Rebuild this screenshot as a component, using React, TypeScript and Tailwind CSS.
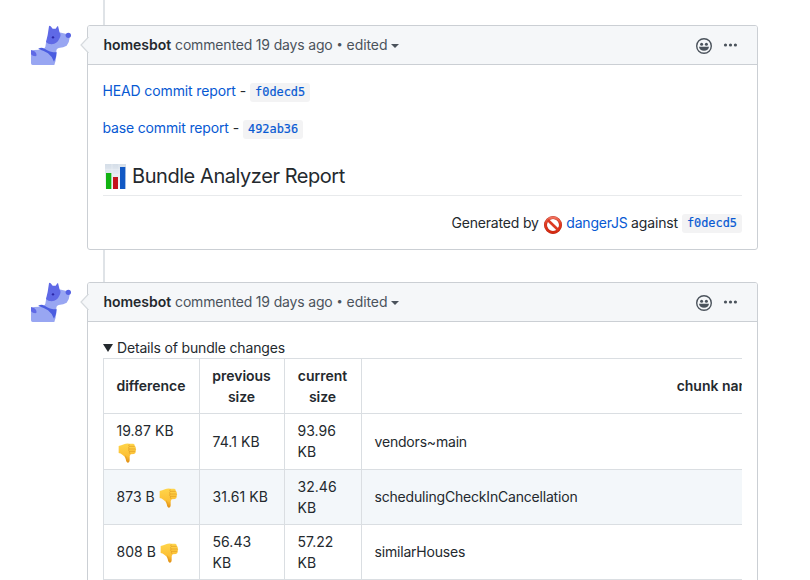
import type { ReactNode } from "react";

function DogAvatar() {
  return (
    <svg width="40" height="40" viewBox="15 15 120 120" className="block">
      <path d="M15 98 Q17 90 24 90 L42 89 Q54 90 58 80 L61 62 L99 37 L122 42 L131 53 Q130 67 122 77 Q113 83 98 84 Q91 86 91 92 L91 108 Q89 126 85 135 L20 135 Q15 135 15 130 Z" fill="#98a6f2" />
      <path d="M60 66 L65 45 L69 19 Q70 16 74 19 L80 26 L89 26 L94 19 Q97 17 97 22 L101 38 Q106 44 101 54 Q94 71 77 73 Q66 73 60 66 Z" fill="#5f69e6" />
      <circle cx="127" cy="46" r="8" fill="#5562e3" />
      <circle cx="81" cy="52" r="3.5" fill="#2c27a6" />
      <path d="M37 86 Q46 81 56 86 Q70 97 92 97 Q92 109 84 125 Q77 108 66 100 Q55 92 37 87 Z" fill="#4a5ce0" />
      <path d="M15 90 Q27 92 31 101 Q34 107 28 109 Q20 109 15 103 Z" fill="#5f69e6" />
    </svg>
  );
}

function Smiley() {
  return (
    <svg width="16" height="16" viewBox="0 0 16 16" className="block">
      <circle cx="8" cy="8" r="7.3" fill="none" stroke="#4b535c" strokeWidth="1.4" />
      <circle cx="5.6" cy="6.3" r="1.5" fill="#4b535c" />
      <circle cx="10.4" cy="6.3" r="1.5" fill="#4b535c" />
      <path d="M3 8.8 H13 Q12.4 12.8 8 12.8 Q3.6 12.8 3 8.8 Z" fill="#4b535c" />
    </svg>
  );
}

function Dots() {
  return (
    <svg width="14" height="4" viewBox="0 0 14 4" className="block" fill="#4b535c">
      <circle cx="2.5" cy="2" r="1.6" />
      <circle cx="7.5" cy="2" r="1.6" />
      <circle cx="12.4" cy="2" r="1.6" />
    </svg>
  );
}

function ChartEmoji() {
  return (
    <svg width="21" height="25" viewBox="0 0 63 75" className="block">
      <defs>
        <linearGradient id="paper" x1="0" y1="0" x2="0" y2="1">
          <stop offset="0" stopColor="#d5dee8" />
          <stop offset="1" stopColor="#f7fafc" />
        </linearGradient>
      </defs>
      <rect width="63" height="75" fill="url(#paper)" />
      <path d="M0 16 H63 M0 32 H63 M0 48 H63 M21 0 V75 M42 0 V75" stroke="#eef3f7" strokeWidth="1.5" />
      <rect x="3" y="27" width="16" height="48" fill="#12b312" />
      <rect x="24" y="39" width="15" height="36" fill="#c4141c" />
      <rect x="45" y="9" width="16" height="66" fill="#1158c4" />
    </svg>
  );
}

function NoEntry() {
  return (
    <svg width="18" height="18" viewBox="0 0 18 18" className="block">
      <defs>
        <linearGradient id="ring" x1="0" y1="0" x2="0" y2="1">
          <stop offset="0" stopColor="#f0705c" />
          <stop offset="0.4" stopColor="#e23c22" />
          <stop offset="1" stopColor="#d42a10" />
        </linearGradient>
      </defs>
      <circle cx="9" cy="9" r="7.5" fill="none" stroke="#b52a1c" strokeWidth="3" />
      <circle cx="9" cy="9" r="7.5" fill="none" stroke="url(#ring)" strokeWidth="2.3" />
      <path d="M3.8 4 L14.2 14" stroke="#dc3a22" strokeWidth="2.6" />
    </svg>
  );
}

function ThumbsDown() {
  return (
    <svg width="19" height="20" viewBox="0 0 57 60" className="block">
      <defs>
        <linearGradient id="skin" x1="0" y1="0" x2="0" y2="1">
          <stop offset="0" stopColor="#ffd54a" />
          <stop offset="0.65" stopColor="#fcc036" />
          <stop offset="1" stopColor="#e08c12" />
        </linearGradient>
      </defs>
      <path d="M2 9 Q10 8 18 4 Q24 1 34 2 L46 2 Q51 4 50 8 Q55 11 53 16 Q56 20 53 24 Q54 31 48 33 L38 34 Q34 38 35 46 Q36 59 30 59 Q25 59 23 48 Q21 39 13 35 Q8 31 2 30 Z" fill="url(#skin)" />
      <path d="M34 10 H50 M33 18 H53 M34 25 H52 M34 4 Q30 6 34 10 Q30 14 33 18 Q30 22 34 25 Q33 30 37 33" fill="none" stroke="#dc9420" strokeWidth="1.8" />
      <path d="M22 38 Q26 45 27 55" fill="none" stroke="#e39a1c" strokeWidth="2" />
    </svg>
  );
}

function Code({ children }: { children: ReactNode }) {
  return (
    <code className="mt-[2px] inline-block h-[19px] rounded-[3px] bg-[#f3f3f4] px-[5px] font-['DejaVu_Sans_Mono',monospace] text-[11.9px] leading-[19px] tracking-normal text-[#0759d3] [-webkit-text-stroke:0.2px_#0759d3]">
      {children}
    </code>
  );
}

function Comment({ height, children }: { height: string; children: ReactNode }) {
  return (
    <div className="flex pl-[31px]">
      <div className="w-14 shrink-0">
        <DogAvatar />
      </div>
      <div className={`${height} relative w-[671px] shrink-0 rounded-[3px] border border-[#cbcfd4] bg-white`}>
        <div className="flex h-[39px] items-center rounded-t-[2px] border-b border-[#cbcfd4] bg-[#f5f7f9] pr-[20px] pb-[2px] pl-[15.5px] text-[#4b535c]">
          <svg width="9" height="16" viewBox="0 0 9 16" className="absolute top-[11px] -left-[8px]">
            <path d="M8.5 0 L1 8 L8.5 16" fill="#f5f7f9" stroke="#d6dade" strokeWidth="1.2" />
            <path d="M9 1 V15" stroke="#f5f7f9" strokeWidth="1.5" />
          </svg>
          <b className="font-semibold tracking-[-0.04px] text-[#24292e]">homesbot</b>
          <span className="ml-1">commented 19 days ago</span>
          <span className="mx-1 text-[11px]">•</span>
          <span className="tracking-[-0.08px]">edited</span>
          <svg width="8" height="4" viewBox="0 0 8 4" className="mt-[4px] ml-1" fill="#4b535c">
            <path d="M0 0 H8 L4 4 Z" />
          </svg>
          <span className="mt-[3px] ml-auto">
            <Smiley />
          </span>
          <span className="mt-[2px] ml-[11px]">
            <Dots />
          </span>
        </div>
        {children}
      </div>
    </div>
  );
}

const rows = [
  { diff: "19.87 KB", wrap: true, prev: "74.1 KB", cur: "93.96 KB", name: "vendors~main" },
  { diff: "873 B", wrap: false, prev: "31.61 KB", cur: "32.46 KB", name: "schedulingCheckInCancellation" },
  { diff: "808 B", wrap: false, prev: "56.43 KB", cur: "57.22 KB", name: "similarHouses" },
];

const cell = "border border-[#dadee2] pl-[12.5px] pr-3 pt-0 pb-px";
const head = "border border-[#dadee2] pl-[11px] pr-3 pt-0 pb-px font-semibold tracking-[-0.02px]";

export default function App() {
  return (
    <div className="h-[580px] w-[810px] overflow-hidden bg-white font-[Inter,sans-serif] text-[14px] leading-[21px] tracking-[-0.17px] text-[#24292e]">
      <div className="ml-[103px] h-[25px] w-[2px] bg-[#dfe3e7]" />
      <Comment height="h-[225px]">
        <div className="px-[15px] pt-[15px]">
          <p className="-ml-[0.5px] flex h-[21px] items-center gap-1 tracking-[-0.13px]">
            <a className="text-[#0759d3]">HEAD commit report</a>
            <span>-</span>
            <span className="flex pt-[2px]">
              <Code>f0decd5</Code>
            </span>
          </p>
          <p className="mt-4 -ml-[0.5px] flex h-[21px] items-center gap-1 tracking-[-0.16px]">
            <a className="text-[#0759d3]">base commit report</a>
            <span>-</span>
            <span className="flex pt-[2px]">
              <Code>492ab36</Code>
            </span>
          </p>
          <h2 className="mt-[25px] flex h-[33px] items-start border-b border-[#e8eaec] pl-[2px] text-[20px] leading-[26px] tracking-[-0.44px]">
            <span className="mt-px">
              <ChartEmoji />
            </span>
            <span className="ml-[6px]">Bundle Analyzer Report</span>
          </h2>
          <p className="mt-[16px] flex h-[21px] items-center justify-end">
            <span>Generated by</span>
            <span className="mt-[4px] mr-[4.5px] ml-[5px]">
              <NoEntry />
            </span>
            <a className="tracking-[-0.2px] text-[#0759d3]">dangerJS</a>
            <span className="mr-[4px] ml-[3.5px]">against</span>
            <Code>f0decd5</Code>
          </p>
        </div>
      </Comment>
      <div className="ml-[103px] h-[32px] w-[2px] bg-[#dfe3e7]" />
      <Comment height="h-[400px]">
        <div className="px-[15px] pt-[15px]">
          <div className="flex h-[21px] items-center">
            <svg width="10" height="8" viewBox="0 0 10 8" className="-ml-[0.5px] mt-px" fill="#24292e">
              <path d="M0 0 H10 L5 8 Z" />
            </svg>
            <span className="ml-[4.5px]">Details of bundle changes</span>
          </div>
          <div className="w-[639px] overflow-hidden">
            <table className="w-[973px] table-fixed border-collapse">
              <colgroup>
                <col className="w-[96px]" />
                <col className="w-[85px]" />
                <col className="w-[77px]" />
                <col />
              </colgroup>
              <thead>
                <tr className="h-[55px]">
                  <th className={head}>difference</th>
                  <th className={head}>previous size</th>
                  <th className={head}>current size</th>
                  <th className={head}>chunk name</th>
                </tr>
              </thead>
              <tbody>
                {rows.map((r, i) => (
                  <tr key={r.name} className={`${i === 0 ? "h-[56px]" : "h-[55px]"} ${i === 1 ? "bg-[#f3f7fa]" : "bg-white"}`}>
                    <td className={`${cell} tracking-[0.03px]`}>
                      <div className={r.wrap ? "flex flex-col" : "flex items-center gap-1"}>
                        <span>{r.diff}</span>
                        <span className={r.wrap ? "mt-[2px] ml-[1.5px]" : "mt-[3px] ml-[0.5px]"}>
                          <ThumbsDown />
                        </span>
                      </div>
                    </td>
                    <td className={`${cell} tracking-[0.06px]`}>{r.prev}</td>
                    <td className={`${cell} tracking-[0.03px]`}>{r.cur}</td>
                    <td className={`${cell} tracking-[-0.19px]`}>{r.name}</td>
                  </tr>
                ))}
              </tbody>
            </table>
          </div>
        </div>
      </Comment>
    </div>
  );
}
